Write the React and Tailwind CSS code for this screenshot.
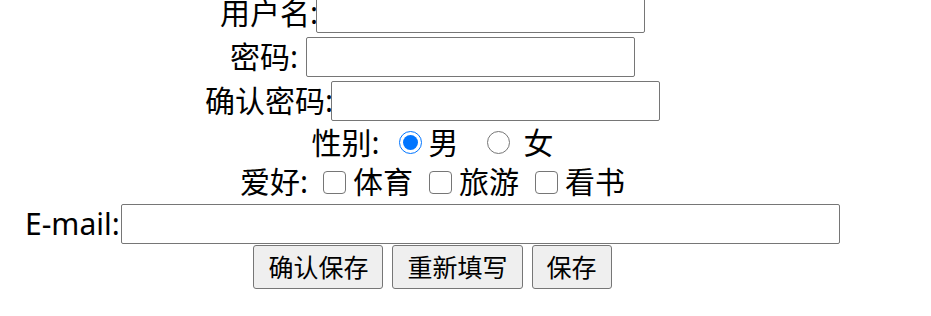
export default function App() {
  const font = { fontFamily: '"Noto Sans", "Noto Sans CJK SC", sans-serif' };
  const Input = ({ w }) => (
    <span className={`${w} h-[40px] border border-[#767676] rounded-[2px] bg-white inline-block shrink-0`} />
  );
  const Radio = ({ checked }) =>
    checked ? (
      <span className="w-[23px] h-[23px] rounded-full border-[1.5px] border-[#0075ff] bg-white flex items-center justify-center shrink-0">
        <span className="w-[15px] h-[15px] rounded-full bg-[#0075ff]" />
      </span>
    ) : (
      <span className="w-[23px] h-[23px] rounded-full border border-[#767676] bg-white shrink-0" />
    );
  const Check = () => (
    <span className="w-[23px] h-[23px] rounded-[4px] border border-[#767676] bg-white shrink-0" />
  );
  const Btn = ({ children }) => (
    <span className="h-[44px] px-[14px] border border-[#767676] rounded-[3px] bg-[#efefef] text-[25px] leading-none flex items-center justify-center">
      {children}
    </span>
  );
  return (
    <div className="w-[931px] h-[316px] bg-white overflow-hidden text-black" style={font}>
      <div className="w-[865px] -mt-[9px] text-[30px]">
        <div className="h-[44px] flex items-center justify-center">
          <span className="leading-none w-[96px] whitespace-nowrap">用户名:</span>
          <Input w="w-[329px]" />
        </div>
        <div className="h-[44px] flex items-center justify-center">
          <span className="leading-none w-[76px] whitespace-nowrap">密码:</span>
          <Input w="w-[329px]" />
        </div>
        <div className="h-[44px] flex items-center justify-center">
          <span className="leading-none w-[126px] whitespace-nowrap">确认密码:</span>
          <Input w="w-[329px]" />
        </div>
        <div className="h-[39px] flex items-center justify-center">
          <span className="leading-none">性别:</span>
          <span className="w-[19px]" />
          <Radio checked />
          <span className="w-[7px]" />
          <span className="leading-none">男</span>
          <span className="w-[28px]" />
          <Radio />
          <span className="w-[14px]" />
          <span className="leading-none">女</span>
        </div>
        <div className="h-[40px] flex items-center justify-center">
          <span className="leading-none">爱好:</span>
          <span className="w-[15px]" />
          <Check />
          <span className="w-[7px]" />
          <span className="leading-none">体育</span>
          <span className="w-[16px]" />
          <Check />
          <span className="w-[7px]" />
          <span className="leading-none">旅游</span>
          <span className="w-[16px]" />
          <Check />
          <span className="w-[7px]" />
          <span className="leading-none">看书</span>
        </div>
        <div className="h-[44px] flex items-center justify-center">
          <span className="leading-none w-[96px] whitespace-nowrap">E-mail:</span>
          <Input w="w-[719px]" />
        </div>
        <div className="h-[44px] flex items-start justify-center gap-[9px] -mt-[1px]">
          <Btn>确认保存</Btn>
          <Btn>重新填写</Btn>
          <Btn>保存</Btn>
        </div>
      </div>
    </div>
  );
}
